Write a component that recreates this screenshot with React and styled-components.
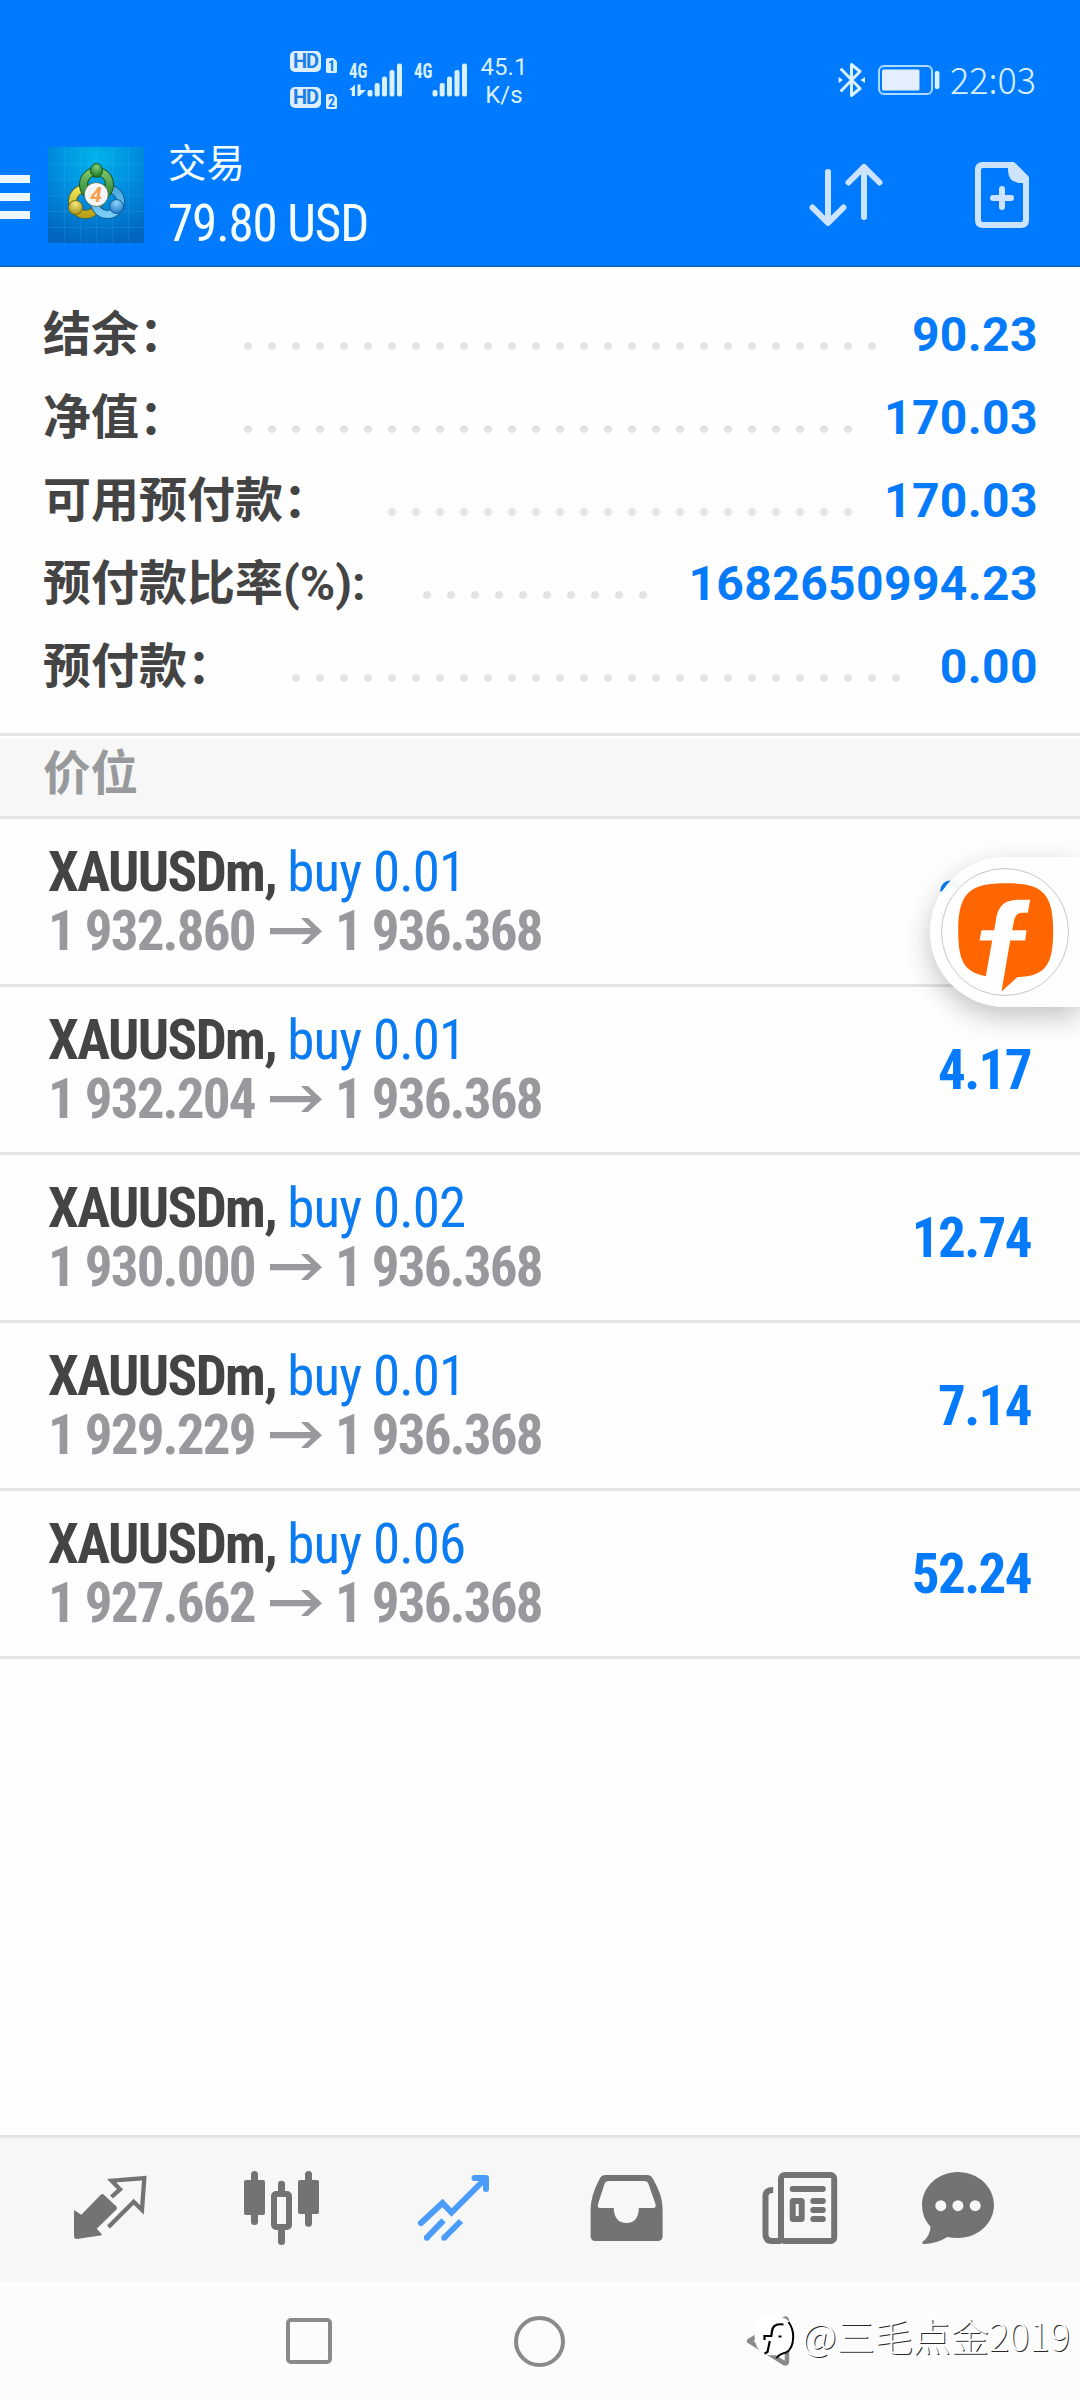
import React from "react";
import styled, { createGlobalStyle } from "styled-components";

const summary = [
  { label: "结余：", value: "90.23", dots: 27 },
  { label: "净值：", value: "170.03", dots: 26 },
  { label: "可用预付款：", value: "170.03", dots: 20 },
  { label: "预付款比率(%):", value: "1682650994.23", dots: 10 },
  { label: "预付款：", value: "0.00", dots: 26 },
];

const positions = [
  { id: 1, lot: "0.01", open: "1 932.860", profit: "3.51" },
  { id: 2, lot: "0.01", open: "1 932.204", profit: "4.17" },
  { id: 3, lot: "0.02", open: "1 930.000", profit: "12.74" },
  { id: 4, lot: "0.01", open: "1 929.229", profit: "7.14" },
  { id: 5, lot: "0.06", open: "1 927.662", profit: "52.24" },
];

const Signal = ({ data }) => (
  <svg width="54" height="46" viewBox="0 -5 54 46" fill="#d9f0ff">
    <text x="0" y="16.5" textLength="18.5" lengthAdjust="spacingAndGlyphs" fontFamily="Roboto Condensed" fontWeight="700" fontSize="21">
      4G
    </text>
    {data && <path d="M0 29 6 23.5V35H2.8V29ZM8.5 23.5H11.5V29H17L10.5 35H8.5Z" />}
    <rect x="18.5" y="29" width="5" height="6.5" rx="2" />
    <rect x="25.7" y="22" width="5" height="13.5" rx="2" />
    <rect x="33" y="15.5" width="5" height="20" rx="2" />
    <rect x="40.5" y="9" width="5" height="26.5" rx="2" />
    <rect x="48" y="2.5" width="5" height="33" rx="2" />
  </svg>
);

const Sim = ({ n }) => (
  <svg width="11" height="15" viewBox="0 0 11 15">
    <path d="M1.5 0H7.5L11 3.5V13.5Q11 15 9.5 15H1.5Q0 15 0 13.5V1.5Q0 0 1.5 0Z" fill="#d9f0ff" />
    <text x="5.5" y="12.5" textAnchor="middle" fontFamily="Roboto Condensed" fontWeight="700" fontSize="14" fill="#007aff">
      {n}
    </text>
  </svg>
);

const Bluetooth = () => (
  <svg width="28" height="36" viewBox="0 0 28 36" fill="none" stroke="#d9f0ff" strokeWidth="3">
    <path d="M3.5 7.5 22 26.5 13.5 33.5V2.5L22 9.5 3.5 28.5" strokeLinejoin="round" strokeLinecap="round" />
    <path d="M0.5 15 5 18 0.5 21ZM27 15 22.5 18 27 21Z" fill="#d9f0ff" stroke="none" />
  </svg>
);

const Battery = () => (
  <svg width="62" height="30" viewBox="0 0 62 30">
    <rect x="1" y="1" width="53" height="28" rx="5" fill="none" stroke="#a9dcff" strokeWidth="2" />
    <rect x="4" y="4.5" width="37.5" height="21" rx="1.5" fill="#e4f0ff" />
    <rect x="56.8" y="6" width="4.6" height="18" rx="1.8" fill="#d9f0ff" />
  </svg>
);

const AppLogo = () => (
  <svg width="96" height="96" viewBox="0 0 96 96">
    <defs>
      <radialGradient id="sky" cx="50%" cy="12%" r="90%">
        <stop offset="0" stopColor="#00b4ea" />
        <stop offset="0.45" stopColor="#0090e0" />
        <stop offset="1" stopColor="#0065be" />
      </radialGradient>
      <linearGradient id="green" x1="0" y1="0" x2="0" y2="1">
        <stop offset="0" stopColor="#7cc36a" />
        <stop offset="1" stopColor="#23802f" />
      </linearGradient>
      <linearGradient id="yellow" x1="0" y1="0" x2="0" y2="1">
        <stop offset="0" stopColor="#efe65a" />
        <stop offset="1" stopColor="#b9a31c" />
      </linearGradient>
      <linearGradient id="blue" x1="0" y1="0" x2="0" y2="1">
        <stop offset="0" stopColor="#4ba6e0" />
        <stop offset="1" stopColor="#79cdf5" />
      </linearGradient>
      <radialGradient id="greenBall" cx="50%" cy="25%" r="75%">
        <stop offset="0" stopColor="#7fd07a" />
        <stop offset="1" stopColor="#14701f" />
      </radialGradient>
      <radialGradient id="yellowBall" cx="50%" cy="25%" r="75%">
        <stop offset="0" stopColor="#f4ea7c" />
        <stop offset="1" stopColor="#a8921a" />
      </radialGradient>
      <radialGradient id="blueBall" cx="50%" cy="25%" r="75%">
        <stop offset="0" stopColor="#8fd4fb" />
        <stop offset="1" stopColor="#1b78c4" />
      </radialGradient>
    </defs>
    <rect width="96" height="96" fill="url(#sky)" />
    <path
      d="M0 16.5H96M0 32.5H96M0 48.5H96M0 64.5H96M0 80.5H96M16.5 0V96M32.5 0V96M48.5 0V96M64.5 0V96M80.5 0V96"
      stroke="#5cc8ff"
      strokeOpacity="0.14"
    />
    <g fill="none">
      <circle cx="37.5" cy="54.5" r="13" stroke="#5d6420" strokeWidth="9" />
      <circle cx="37.5" cy="54.5" r="13" stroke="url(#yellow)" strokeWidth="7" />
      <circle cx="59.5" cy="54.5" r="13" stroke="#115a92" strokeWidth="9" />
      <circle cx="59.5" cy="54.5" r="13" stroke="url(#blue)" strokeWidth="7" />
      <circle cx="48.5" cy="37.5" r="13" stroke="#14591f" strokeWidth="9" />
      <circle cx="48.5" cy="37.5" r="13" stroke="url(#green)" strokeWidth="7" />
    </g>
    <ellipse cx="48.5" cy="23.5" rx="6" ry="7" fill="url(#greenBall)" stroke="#14591f" />
    <circle cx="27.5" cy="60.5" r="7" fill="url(#yellowBall)" stroke="#6f6a1a" />
    <circle cx="68.5" cy="59.5" r="7" fill="url(#blueBall)" stroke="#115a92" />
    <circle cx="48.3" cy="47.5" r="12" fill="#f4f5f6" stroke="#3b6a4a" strokeWidth="0.8" />
    <text x="48" y="55" textAnchor="middle" fontFamily="Roboto" fontWeight="700" fontStyle="italic" fontSize="21" fill="#f5a04a">
      4
    </text>
  </svg>
);

const SortIcon = () => (
  <svg width="76" height="64" viewBox="0 0 76 64" fill="none" stroke="#cce4ff" strokeWidth="6" strokeLinecap="round" strokeLinejoin="round">
    <path d="M20 9V59M4.5 44.5 20 60 35.5 44.5" />
    <path d="M56 54V4M40.5 19.5 56 4 71.5 19.5" />
  </svg>
);

const NewOrderIcon = () => (
  <svg width="54" height="66" viewBox="0 0 54 66">
    <path d="M8 3H38L51 16V58Q51 63 46 63H8Q3 63 3 58V8Q3 3 8 3Z" fill="none" stroke="#cce4ff" strokeWidth="6" strokeLinejoin="round" />
    <path d="M33 3H39L51 15V21H46Q33 21 33 8Z" fill="#cce4ff" />
    <path d="M27 27V45M18 36H36" stroke="#cce4ff" strokeWidth="6" strokeLinecap="round" />
  </svg>
);

const PriceArrow = () => (
  <svg width="52" height="28" viewBox="0 0 52 28" fill="#98999c">
    <path d="M0 11H41L31 1H38L52 14.2 38 27H31L41 17.3H0Z" />
  </svg>
);

const QuotesIcon = () => (
  <svg width="76" height="68" viewBox="0 0 76 68">
    <path d="M2 36 9.3 40.7 28.8 20.7Q30.3 19.3 31.8 20.7L44.5 32.5Q45.5 34 44.5 35.5L24.7 54.7 29.7 60V61.3L4.7 65Q2 65 2 62Z" fill="#737373" />
    <path d="M39.5 23 48 15.3 39.7 6.7 72.3 4.2 70 36 61.7 27.7 36.5 53" fill="none" stroke="#737373" strokeWidth="4.3" strokeLinejoin="miter" />
  </svg>
);

const ChartIcon = () => (
  <svg width="79" height="78" viewBox="0 0 79 78" fill="#737373">
    <rect x="2" y="11" width="21" height="35" rx="2" />
    <rect x="9" y="2" width="7" height="54" rx="3.5" />
    <rect x="56" y="11" width="21" height="34" rx="2" />
    <rect x="63" y="2" width="7" height="55.7" rx="3.5" />
    <path d="M36 22V15Q36 11.7 39.5 11.7 43 11.7 43 15V22ZM36 61H43V72.5Q43 76 39.5 76 36 76 36 72.5Z" />
    <rect x="32" y="25" width="15" height="33" rx="2" fill="none" stroke="#737373" strokeWidth="6" />
  </svg>
);

const TradeIcon = () => (
  <svg width="76" height="70" viewBox="0 0 76 70" fill="none" stroke="#4a9cf8" strokeWidth="6">
    <path d="M5 50 26.5 30 35.5 39.5 69 6" strokeLinecap="round" />
    <path d="M58.5 5H70V16" strokeLinecap="round" strokeLinejoin="round" />
    <path d="M27.5 47.3 11 64.5M45 48 28.5 64.5" />
    <circle cx="10.8" cy="64.8" r="3" fill="#4a9cf8" stroke="none" />
    <circle cx="28.3" cy="64.8" r="3" fill="#4a9cf8" stroke="none" />
  </svg>
);

const HistoryIcon = () => (
  <svg width="78" height="70" viewBox="0 0 78 70">
    <path
      fill="#737373"
      fillRule="evenodd"
      d="M17.5 2H59Q63 2 65 6 74.6 22 74.6 36V63Q74.6 68 69.5 68H7.5Q2.6 68 2.6 63V36Q3 22 11.5 6 13.5 2 17.5 2ZM21 8Q17.5 8 16.5 11L10 31Q9 35 12 35H25.7Q26.5 50 38.3 50 50.5 50 50.8 35H65Q68.5 35 67.5 31L60.5 11Q59.5 8 56 8Z"
    />
  </svg>
);

const NewsIcon = () => (
  <svg width="79" height="76" viewBox="0 0 79 76" fill="none" stroke="#737373" strokeWidth="6">
    <rect x="21" y="5" width="53.2" height="66" rx="3.5" />
    <path d="M13.2 20Q5.5 20 5.5 26V64Q5.5 71 12 71H21" />
    <rect x="32.7" y="31" width="9" height="18" rx="0.5" />
    <path d="M32.7 19H62.8M53.3 31H62.8M53.3 40H62.8M53.3 49H62.8" strokeLinecap="round" />
  </svg>
);

const ChatIcon = () => (
  <svg width="76" height="76" viewBox="0 0 76 76">
    <path d="M38 2C58 2 74 17 74 35S58 68 38 68Q32 68 27.4 67 16 74 4 74 1 73.5 3 71.5 10 66 10.5 56.7 2 48 2 35C2 17 18 2 38 2Z" fill="#737373" />
    <circle cx="20.8" cy="35.7" r="5.5" fill="#f7f7f7" />
    <circle cx="37.9" cy="35.7" r="5.5" fill="#f7f7f7" />
    <circle cx="55.2" cy="35.7" r="5.5" fill="#f7f7f7" />
  </svg>
);

const BackIcon = () => (
  <svg width="50" height="52" viewBox="0 0 50 52">
    <path d="M4 26 39 4Q42 2.5 42 6V46Q42 49.5 39 48Z" fill="none" stroke="#8a8a8a" strokeWidth="4.5" strokeLinejoin="round" />
  </svg>
);

const FireLogo = () => (
  <svg width="127" height="127" viewBox="0 0 127 127">
    <path
      fill="#ff6600"
      d="M63.7 14.2C98 14.2 111.2 22 111.2 61 111.2 96 104 107 75.2 108.2L59.5 122.5 68.2 71.5H83.2L84.5 61.2H70.2L72 52Q73.5 43.8 80 43.8H85.8L88.2 30.8H75.2C62 31 55.5 38 54 51L52.2 61.2H39.5L37.5 71.5H50.2L43.8 107.2C22 103 16.2 92 16.2 61 16.2 22 30 14.2 63.7 14.2Z"
    />
  </svg>
);

const MarkLogo = () => (
  <svg width="46" height="52" viewBox="0 0 46 52">
    <path d="M22 5C38 5 44 12 43.5 26 43 36 40 41 34 43L26 48 27 44C10 46 5 36 4.5 25 4.5 10 10 5 22 5Z" fill="#fff" />
    <path d="M38.5 11Q43.5 18 43.2 26 43 38 36 41.5 28 43.5 26.5 47.5" fill="none" stroke="#000" strokeWidth="2" />
    <path d="M33.5 13.5Q23 12 22 20L21.3 25H14.5V29M19.8 30 17.5 41 14.5 42.5M28.5 25.5H31.5" fill="none" stroke="#000" strokeWidth="2.2" />
  </svg>
);

const App = () => {
  return (
    <Phone>
      <GlobalStyle />
      <Header>
        <StatusBar>
          <HdColumn>
            {[1, 2].map((n) => (
              <HdRow key={n}>
                <HdBadge>HD</HdBadge>
                <Sim n={n} />
              </HdRow>
            ))}
          </HdColumn>
          <Signals>
            <Signal data />
            <Signal />
          </Signals>
          <Speed>
            <span>45.1</span>
            <span>K/s</span>
          </Speed>
          <StatusRight>
            <Bluetooth />
            <Battery />
            <Clock>22:03</Clock>
          </StatusRight>
        </StatusBar>
        <Toolbar>
          <Burger>
            <i />
            <i />
            <i />
          </Burger>
          <AppLogo />
          <Titles>
            <h1>交易</h1>
            <p>79.80 USD</p>
          </Titles>
          <Actions>
            <SortIcon />
            <NewOrderIcon />
          </Actions>
        </Toolbar>
      </Header>

      <Summary>
        {summary.map((s) => (
          <SummaryRow key={s.label}>
            <SummaryLabel>{s.label}</SummaryLabel>
            <Dots $count={s.dots} />
            <SummaryValue>{s.value}</SummaryValue>
          </SummaryRow>
        ))}
      </Summary>

      <SectionTitle>价位</SectionTitle>

      <PositionList>
        {positions.map((p) => (
          <Position key={p.id}>
            <div>
              <Symbol>
                XAUUSDm, <span>buy {p.lot}</span>
              </Symbol>
              <Prices>
                <Price>{p.open}</Price>
                <PriceArrow />
                <Price>1 936.368</Price>
              </Prices>
            </div>
            <Profit>{p.profit}</Profit>
          </Position>
        ))}
      </PositionList>

      <TabBar>
        <QuotesIcon />
        <ChartIcon />
        <TradeIcon />
        <HistoryIcon />
        <NewsIcon />
        <ChatIcon />
      </TabBar>

      <NavBar>
        <RecentsKey />
        <HomeKey />
        <BackIcon />
      </NavBar>

      <FloatButton>
        <FloatRing>
          <FireLogo />
        </FloatRing>
      </FloatButton>

      <Watermark>
        <MarkLogo />
        <span>@三毛点金2019</span>
      </Watermark>
    </Phone>
  );
};

const GlobalStyle = createGlobalStyle`
  * {
    box-sizing: border-box;
    margin: 0;
    padding: 0;
  }
  body {
    background: #fff;
    font-family: Roboto, "Noto Sans CJK SC", sans-serif;
  }
  svg {
    display: block;
    flex: none;
    overflow: visible;
  }
`;

const Phone = styled.div`
  position: relative;
  display: flex;
  flex-direction: column;
  width: 1080px;
  height: 2400px;
  overflow: hidden;
  background: #fefefe;
`;

const Header = styled.header`
  height: 267px;
  background: #007aff;
  border-bottom: 2px solid #0b69cc;
`;

const StatusBar = styled.div`
  display: flex;
  align-items: center;
  height: 130px;
  padding: 29px 44px 0 290px;
  color: #d9f0ff;
`;

const HdColumn = styled.div`
  display: flex;
  flex-direction: column;
  gap: 15px;
`;

const HdRow = styled.div`
  display: flex;
  align-items: flex-end;
  gap: 5px;
  height: 21px;

  svg {
    margin-bottom: -1px;
  }
`;

const HdBadge = styled.span`
  width: 31px;
  border-radius: 5px;
  background: #dceeff;
  color: #1c7fe8;
  font-size: 20px;
  font-weight: 700;
  line-height: 21px;
  text-align: center;
  letter-spacing: -1px;
`;

const Signals = styled.div`
  display: flex;
  gap: 11px;
  margin: -2px 0 0 12px;
`;

const Speed = styled.div`
  display: flex;
  flex-direction: column;
  width: 50px;
  margin: 3px 0 0 11px;
  font-size: 24px;
  line-height: 28px;
  text-align: center;
`;

const StatusRight = styled.div`
  display: flex;
  align-items: center;
  margin-left: auto;

  svg + svg {
    margin: 0 10px 0 12px;
  }
`;

const Clock = styled.span`
  margin-top: -3px;
  font-family: "Noto Sans CJK SC", sans-serif;
  font-size: 36px;
  font-weight: 300;
  line-height: 44px;
`;

const Toolbar = styled.div`
  display: flex;
  align-items: center;
  height: 130px;
  padding-right: 51px;
`;

const Burger = styled.div`
  display: flex;
  flex-direction: column;
  gap: 10px;
  width: 30px;
  margin: 4px 18px 0 0;

  i {
    height: 8px;
    background: #edf9ff;
  }
`;

const Titles = styled.div`
  margin: 4px 0 0 24px;
  color: #f4feff;

  h1 {
    margin-bottom: 8px;
    font-size: 38.5px;
    font-weight: 400;
    line-height: 45px;
  }

  p {
    font-family: "Roboto Condensed", Roboto, sans-serif;
    font-size: 51px;
    line-height: 60px;
    letter-spacing: -1.1px;
  }
`;

const Actions = styled.div`
  display: flex;
  align-items: center;
  gap: 91px;
  margin-left: auto;
`;

const Summary = styled.section`
  height: 469px;
  padding: 26px 43px 0;
  border-bottom: 3px solid #e4e4e4;
`;

const SummaryRow = styled.div`
  display: flex;
  align-items: center;
  height: 83px;
  font-size: 48px;
  line-height: 56px;
`;

const SummaryLabel = styled.span`
  color: #444;
  font-weight: 700;
`;

const Dots = styled.span`
  width: ${({ $count }) => $count * 24}px;
  height: 8px;
  margin: 23px 0 0 57px;
  background: radial-gradient(circle at 4px 4px, #e4e4e4 3.6px, transparent 4.2px) 0 0 / 24px 8px;
`;

const SummaryValue = styled.span`
  margin-left: auto;
  color: #057bfb;
  font-weight: 700;
  letter-spacing: 0.4px;
  margin-right: -1px;
`;

const SectionTitle = styled.h2`
  height: 83px;
  padding: 3px 43px 0;
  border-bottom: 3px solid #e4e4e4;
  background: #f7f7f7;
  box-shadow: inset 0 3px #fff;
  color: #98999c;
  font-size: 47.5px;
  font-weight: 700;
  line-height: 70px;
`;

const PositionList = styled.main`
  flex: 1;
`;

const Position = styled.article`
  display: flex;
  align-items: center;
  justify-content: space-between;
  height: 168px;
  padding: 0 48px;
  border-bottom: 3px solid #e4e4e4;
  font-family: "Roboto Condensed", Roboto, sans-serif;
  font-size: 55px;
  font-weight: 700;
  line-height: 59px;
  letter-spacing: -1.6px;
`;

const Symbol = styled.div`
  color: #444;

  span {
    color: #0b7bf2;
    font-weight: 400;
    letter-spacing: -0.9px;
  }
`;

const Prices = styled.div`
  display: flex;
  align-items: center;
  color: #98999c;
  letter-spacing: -1.85px;

  svg {
    margin: 0 13px 0 14px;
  }
`;

const Price = styled.span`
  width: 208px;
  white-space: nowrap;
`;

const Profit = styled.span`
  margin: 2px 1px 0 0;
  color: #057bfb;
`;

const TabBar = styled.nav`
  display: grid;
  grid-template-columns: 170px 174px 172px 172px 160px 76px;
  align-items: center;
  height: 147px;
  padding: 0 0 5px 72px;
  border-top: 3px solid #e4e4e4;
  background: #f7f7f7;
`;

const NavBar = styled.div`
  display: flex;
  align-items: center;
  height: 118px;
  padding-left: 286px;
  background: #fcfcfc;

  svg {
    margin-left: 180px;
  }
`;

const RecentsKey = styled.div`
  width: 46px;
  height: 46px;
  border: 4.5px solid #8a8a8a;
  border-radius: 5px;
`;

const HomeKey = styled.div`
  width: 51px;
  height: 51px;
  margin-left: 182px;
  border: 4.5px solid #8a8a8a;
  border-radius: 50%;
`;

const FloatButton = styled.div`
  position: absolute;
  top: 857px;
  right: 0;
  width: 150px;
  height: 150px;
  padding: 11px;
  border-radius: 75px 0 0 75px;
  background: rgba(254, 254, 254, 0.97);
  box-shadow: 0 10px 28px rgba(0, 0, 0, 0.24);
`;

const FloatRing = styled.div`
  width: 128px;
  height: 128px;
  border: 1px solid #c8c8c8;
  border-radius: 50%;
  background: #fff;
`;

const Watermark = styled.div`
  position: absolute;
  right: 10px;
  bottom: 35px;
  display: flex;
  align-items: center;
  gap: 6px;
  color: #fff;

  svg {
    margin-top: 4px;
  }

  span {
    font-family: "Noto Sans CJK SC", sans-serif;
    font-size: 38px;
    font-weight: 300;
    line-height: 60px;
    text-shadow: 1px 1px 0 rgba(0, 0, 0, 0.85);
  }
`;

export default App;
